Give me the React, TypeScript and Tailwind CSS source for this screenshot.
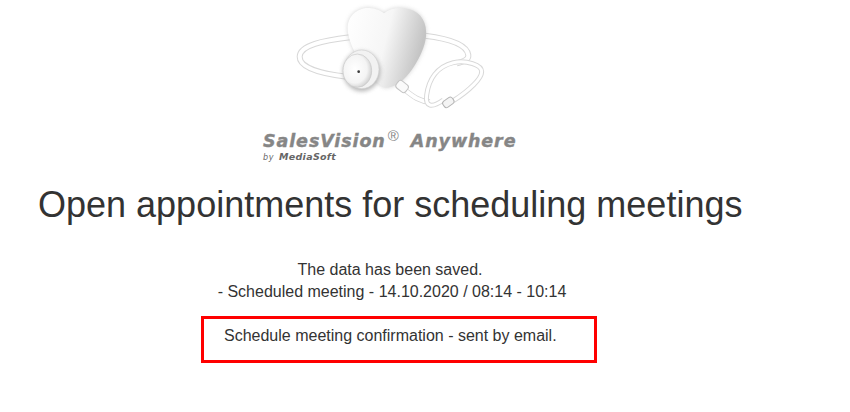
import React from 'react'

const upperLeft = 'M300 112 C220 122 150 135 149 170 C148 205 220 222 290 230'
const upperRight = 'M525 107 C590 115 650 130 655 165 C657 180 640 185 620 190'
const lowerTube = 'M465 270 C490 290 510 305 540 306'
const earTubes =
  'M580 300 C545 325 525 320 530 285 C536 240 560 200 610 188 C650 180 695 195 695 215 C695 235 660 270 610 302'
const heartPath =
  'M400 262 C360 235 296 150 293 88 C292 45 325 22 358 24 C378 25 392 32 402 40 C420 24 450 20 478 28 C515 38 532 70 528 110 C522 165 470 245 430 258 C418 262 410 265 400 262 Z'

const Tube = ({ d, outer, inner }: { d: string; outer: number; inner: number }) => (
  <>
    <path d={d} fill="none" stroke="#d8d8d8" strokeWidth={outer} />
    <path d={d} fill="none" stroke="#ffffff" strokeWidth={inner} />
  </>
)

const Logo = () => (
  <svg width={280} height={115} viewBox="0 0 840 345" className="block">
    <defs>
      <linearGradient id="heart" x1="0" y1="0" x2="1" y2="0.25">
        <stop offset="0" stopColor="#ffffff" />
        <stop offset="0.55" stopColor="#f6f6f6" />
        <stop offset="1" stopColor="#c4c4c4" />
      </linearGradient>
      <radialGradient id="disc" cx="0.42" cy="0.45" r="0.6">
        <stop offset="0" stopColor="#ffffff" />
        <stop offset="0.7" stopColor="#f4f4f4" />
        <stop offset="1" stopColor="#cfcfcf" />
      </radialGradient>
      <filter id="soft" x="-20%" y="-20%" width="140%" height="140%">
        <feGaussianBlur stdDeviation="6" />
      </filter>
    </defs>
    <Tube d={upperLeft} outer={18} inner={12} />
    <Tube d={upperRight} outer={18} inner={12} />
    <path d={heartPath} fill="#b0b0b0" opacity="0.55" filter="url(#soft)" />
    <path d={heartPath} fill="url(#heart)" />
    <ellipse cx="335" cy="214" rx="56" ry="60" fill="#909090" opacity="0.65" filter="url(#soft)" />
    <ellipse cx="335" cy="208" rx="52" ry="58" fill="#f2f2f2" stroke="#d0d0d0" strokeWidth="2" />
    <ellipse cx="322" cy="212" rx="43" ry="50" fill="url(#disc)" stroke="#c8c8c8" strokeWidth="2" />
    <circle cx="326" cy="215" r="4" fill="#3a3a3a" />
    <Tube d={lowerTube} outer={16} inner={11} />
    <rect
      x="438"
      y="246"
      width="36"
      height="27"
      rx="9"
      transform="rotate(38 456 260)"
      fill="#fafafa"
      stroke="#c4c4c4"
      strokeWidth="3"
    />
    <Tube d={earTubes} outer={15} inner={9} />
    <rect
      x="578"
      y="296"
      width="34"
      height="22"
      rx="8"
      transform="rotate(-35 595 307)"
      fill="#f4f4f4"
      stroke="#b4b4b4"
      strokeWidth="3"
    />
  </svg>
)

export default function App() {
  return (
    <div className="min-h-[412px] bg-white font-['Liberation_Sans',Arial,sans-serif] text-[#333333]">
      <div className="w-[780px] flex flex-col">
        <div className="flex flex-col items-center">
          <Logo />
          <div className="w-[254px] mt-[17px] font-['DejaVu_Sans',sans-serif] font-bold italic text-[#868686]">
            <div className="flex items-start h-[19px] text-[17.5px] leading-[19px] [-webkit-text-stroke:0.4px_#868686]">
              <span className="tracking-[0.9px]">SalesVision</span>
              <span className="font-['Liberation_Sans',sans-serif] font-normal not-italic text-[15px] leading-[15px] ml-[2px] -mt-[4px] [-webkit-text-stroke:0px]">
                ®
              </span>
              <span className="ml-[12px] tracking-[0.9px]">Anywhere</span>
            </div>
            <div className="flex items-baseline text-[8px] leading-[10px] mt-[1px] text-[#666666]">
              <span className="font-normal tracking-[0.6px] mr-[5px]">by</span>
              <span className="text-[9.5px] tracking-[0.3px]">MediaSoft</span>
            </div>
          </div>
        </div>
        <h1 className="mt-[22px] pl-[38px] text-[36px] leading-[40px] font-normal whitespace-nowrap">
          Open appointments for scheduling meetings
        </h1>
        <div className="mt-[34px] text-center text-[16px] leading-[22px]">
          <p>The data has been saved.</p>
          <p className="pl-[4px]">- Scheduled meeting - 14.10.2020 / 08:14 - 10:14</p>
        </div>
        <div className="ml-[201px] mt-[13px] w-[396px] h-[47px] border-[3px] border-[#ff0000] pl-[20px] pt-[5px] text-[16px] leading-[24px]">
          Schedule meeting confirmation - sent by email.
        </div>
      </div>
    </div>
  )
}
